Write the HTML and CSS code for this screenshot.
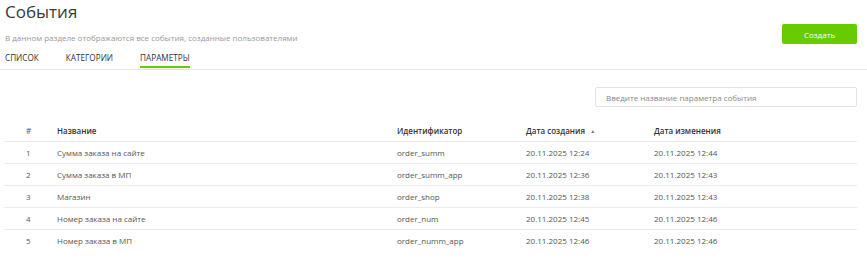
FILE: index.html
```html
<!DOCTYPE html>
<html lang="ru">
<head>
  <meta charset="UTF-8" />
  <title>События</title>
  <link rel="stylesheet" href="styles.css">
</head>
<body>
  <header class="page-head">
    <div class="head-info">
      <h1>События</h1>
      <p class="subtitle">В данном разделе отображаются все события, созданные пользователями</p>
    </div>
    <button class="btn-create">Создать</button>
  </header>

  <nav class="tabs">
    <a class="tab">Список</a>
    <a class="tab">Категории</a>
    <a class="tab active">Параметры</a>
  </nav>

  <main class="content">
    <div class="toolbar">
      <input class="search" type="text" placeholder="Введите название параметра события" />
    </div>

    <table class="params">
      <colgroup>
        <col class="c-num" />
        <col class="c-name" />
        <col class="c-id" />
        <col class="c-date" />
        <col />
      </colgroup>
      <thead>
        <tr>
          <th class="num">#</th>
          <th>Название</th>
          <th>Идентификатор</th>
          <th>Дата создания <span class="sort">&#9650;</span></th>
          <th>Дата изменения</th>
        </tr>
      </thead>
      <tbody>
        <tr><td>1</td><td>Сумма заказа на сайте</td><td>order_summ</td><td>20.11.2025 12:24</td><td>20.11.2025 12:44</td></tr>
        <tr><td>2</td><td>Сумма заказа в МП</td><td>order_summ_app</td><td>20.11.2025 12:36</td><td>20.11.2025 12:43</td></tr>
        <tr><td>3</td><td>Магазин</td><td>order_shop</td><td>20.11.2025 12:38</td><td>20.11.2025 12:43</td></tr>
        <tr><td>4</td><td>Номер заказа на сайте</td><td>order_num</td><td>20.11.2025 12:45</td><td>20.11.2025 12:46</td></tr>
        <tr><td>5</td><td>Номер заказа в МП</td><td>order_numm_app</td><td>20.11.2025 12:46</td><td>20.11.2025 12:46</td></tr>
      </tbody>
    </table>
  </main>
</body>
</html>
```

FILE: styles.css
```css
body {
  margin: 0;
  font-family: 'Open Sans', sans-serif;
  color: #333;
  background: #fff;
}

.page-head {
  display: flex;
  justify-content: space-between;
  align-items: flex-start;
  padding: 0 10px 0 5px;
}

.page-head h1 {
  margin: 0;
  font-size: 17px;
  font-weight: normal;
  line-height: 24px;
  color: #3a3a3a;
}

.subtitle {
  margin: 8px 0 0;
  font-size: 8px;
  line-height: 12px;
  color: #999;
}

.btn-create {
  margin-top: 24px;
  width: 75px;
  height: 20px;
  border: none;
  border-radius: 2px;
  background-color: #66cc00;
  color: white;
  font-family: inherit;
  font-size: 8px;
  cursor: pointer;
}

.tabs {
  display: flex;
  gap: 27px;
  padding: 0 5px;
  margin-top: 9px;
  border-bottom: 1px solid #e6e6e6;
}

.tab {
  font-size: 8.2px;
  line-height: 10px;
  text-transform: uppercase;
  color: #333;
  padding-bottom: 3px;
  margin-bottom: 1px;
  border-bottom: 2px solid transparent;
  cursor: pointer;
}

.tab.active {
  border-bottom-color: #66cc00;
}

.content {
  padding: 0 10px 0 4px;
}

.toolbar {
  display: flex;
  justify-content: flex-end;
  margin-top: 17px;
}

.search {
  width: 262px;
  height: 20px;
  box-sizing: border-box;
  border: 1px solid #e3e3e3;
  border-radius: 2px;
  padding: 0 10px;
  font-family: inherit;
  font-size: 8px;
  color: #333;
}

.search::placeholder {
  color: #888;
}

.params {
  width: 100%;
  margin-top: 13px;
  border-collapse: collapse;
  table-layout: fixed;
  font-size: 8px;
}

.c-num { width: 53px; }
.c-name { width: 340px; }
.c-id { width: 129px; }
.c-date { width: 128px; }

.params th,
.params td {
  height: 21px;
  padding: 0;
  text-align: left;
  white-space: nowrap;
}

.params th {
  font-weight: 600;
  color: #333;
  border-bottom: 1px solid #ebebeb;
}

.params th.num {
  color: #777;
}

.params td {
  color: #555;
}

.params th:first-child,
.params td:first-child {
  padding-left: 22px;
}

.params tbody tr + tr td {
  border-top: 1px solid #ebebeb;
}

.sort {
  font-size: 5px;
  color: #777;
  margin-left: 3px;
  vertical-align: 1px;
}
```
